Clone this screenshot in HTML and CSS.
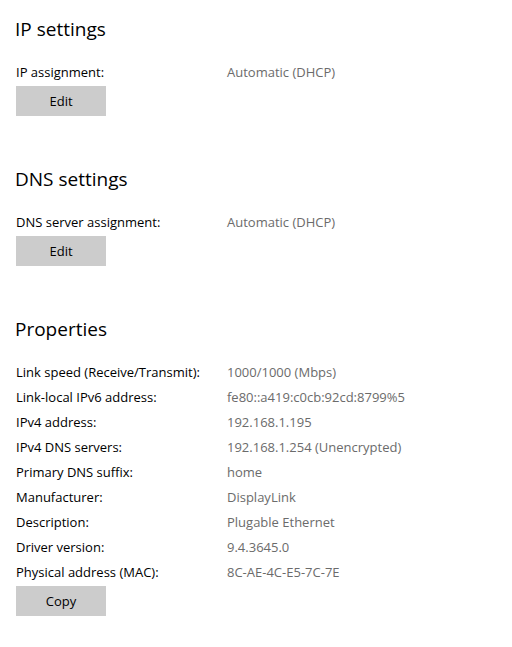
FILE: index.html
```html
<!DOCTYPE html>
<html>
<head>
<meta charset="utf-8">
<link rel="stylesheet" href="styles.css">
</head>
<body>
<div class="page">
  <section class="section">
    <h2 class="heading">IP settings</h2>
    <div class="rows">
      <div class="row"><span class="label">IP assignment:</span><span class="value">Automatic (DHCP)</span></div>
    </div>
    <button class="btn">Edit</button>
  </section>
  <section class="section">
    <h2 class="heading">DNS settings</h2>
    <div class="rows">
      <div class="row"><span class="label">DNS server assignment:</span><span class="value">Automatic (DHCP)</span></div>
    </div>
    <button class="btn">Edit</button>
  </section>
  <section class="section">
    <h2 class="heading">Properties</h2>
    <div class="rows">
      <div class="row"><span class="label">Link speed (Receive/Transmit):</span><span class="value">1000/1000 (Mbps)</span></div>
      <div class="row"><span class="label">Link-local IPv6 address:</span><span class="value">fe80::a419:c0cb:92cd:8799%5</span></div>
      <div class="row"><span class="label">IPv4 address:</span><span class="value">192.168.1.195</span></div>
      <div class="row"><span class="label">IPv4 DNS servers:</span><span class="value">192.168.1.254 (Unencrypted)</span></div>
      <div class="row"><span class="label">Primary DNS suffix:</span><span class="value">home</span></div>
      <div class="row"><span class="label">Manufacturer:</span><span class="value">DisplayLink</span></div>
      <div class="row"><span class="label">Description:</span><span class="value">Plugable Ethernet</span></div>
      <div class="row"><span class="label">Driver version:</span><span class="value">9.4.3645.0</span></div>
      <div class="row"><span class="label">Physical address (MAC):</span><span class="value">8C-AE-4C-E5-7C-7E</span></div>
    </div>
    <button class="btn">Copy</button>
  </section>
</div>
</body>
</html>
```
FILE: styles.css
```css
html, body {
  margin: 0;
  padding: 0;
  background: #ffffff;
}
body {
  font-family: "Open Sans", "Noto Sans", "Liberation Sans", sans-serif;
  color: #000;
}
.page {
  padding: 15px 0 0 16px;
  display: flex;
  flex-direction: column;
  gap: 49px;
}
.section {
  display: flex;
  flex-direction: column;
  align-items: flex-start;
}
.heading {
  margin: 0 0 0 -1px;
  font-size: 19px;
  font-weight: 400;
  line-height: 28px;
  height: 28px;
}
.rows {
  margin-top: 16px;
  display: flex;
  flex-direction: column;
  width: 100%;
}
.row {
  display: flex;
  height: 25px;
  align-items: center;
  font-size: 13px;
}
.label {
  width: 211px;
  flex: none;
  color: #000;
}
.value {
  color: #6b6b6b;
}
.btn {
  margin-top: 2px;
  width: 90px;
  height: 30px;
  border: none;
  background: #cccccc;
  font-family: inherit;
  font-size: 13px;
  color: #000;
  padding: 0;
}
```
